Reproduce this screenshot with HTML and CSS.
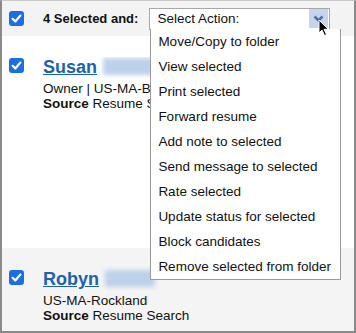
FILE: index.html
```html
<!DOCTYPE html>
<html lang="en">
<head>
    <meta charset="UTF-8">
    <meta name="viewport" content="width=device-width, initial-scale=1.0">
    <title>Candidates</title>
    <link rel="stylesheet" href="styles.css">
</head>
<body>
    <div class="frame">
        <div class="toolbar">
            <span class="check"><svg viewBox="0 0 15 15" width="15" height="15"><rect width="15" height="15" rx="3" fill="#1a6fe6"/><path d="M3.6 7.8 L6.3 10.4 L11.4 4.6" fill="none" stroke="#fff" stroke-width="2.2" stroke-linecap="round" stroke-linejoin="round"/></svg></span>
            <span class="selected-count">4 Selected and:</span>
            <div class="action-select">
                <span class="action-label">Select Action:</span>
                <span class="chevron"><svg viewBox="0 0 19 19" width="19" height="19"><path d="M5.5 7.5 L9.5 11.5 L13.5 7.5" fill="none" stroke="#4f70a8" stroke-width="2.6"/></svg></span>
                <svg class="cursor" viewBox="0 0 12 18" width="12" height="18"><path d="M1 1 L1 14 L4 11 L6.5 16.5 L8.5 15.5 L6 10.3 L10.3 10.3 Z" fill="#000" stroke="#fff" stroke-width="1"/></svg>
                <ul class="action-menu">
                    <li>Move/Copy to folder</li>
                    <li>View selected</li>
                    <li>Print selected</li>
                    <li>Forward resume</li>
                    <li>Add note to selected</li>
                    <li>Send message to selected</li>
                    <li>Rate selected</li>
                    <li>Update status for selected</li>
                    <li>Block candidates</li>
                    <li>Remove selected from folder</li>
                </ul>
            </div>
        </div>

        <div class="candidate first">
            <span class="check"><svg viewBox="0 0 15 15" width="15" height="15"><rect width="15" height="15" rx="3" fill="#1a6fe6"/><path d="M3.6 7.8 L6.3 10.4 L11.4 4.6" fill="none" stroke="#fff" stroke-width="2.2" stroke-linecap="round" stroke-linejoin="round"/></svg></span>
            <div class="info clipped">
                <a class="name" href="#">Susan</a><span class="blur wide"></span>
                <div class="line">Owner | US-MA-Braintree</div>
                <div class="line"><b>Source</b> Resume Search</div>
            </div>
        </div>

        <div class="candidate shaded">
            <span class="check"><svg viewBox="0 0 15 15" width="15" height="15"><rect width="15" height="15" rx="3" fill="#1a6fe6"/><path d="M3.6 7.8 L6.3 10.4 L11.4 4.6" fill="none" stroke="#fff" stroke-width="2.2" stroke-linecap="round" stroke-linejoin="round"/></svg></span>
            <div class="info">
                <a class="name" href="#">Robyn</a><span class="blur"></span>
                <div class="line">US-MA-Rockland</div>
                <div class="line"><b>Source</b> Resume Search</div>
            </div>
        </div>
    </div>
</body>
</html>
```

FILE: styles.css
```css
body {
    margin: 0;
    font-family: "Liberation Sans", Arial, sans-serif;
    color: #111;
}

.frame {
    width: 356px;
    height: 333px;
    box-sizing: border-box;
    border: 2px solid #8a8a8a;
    border-top: 1px solid #c9c9c9;
    overflow: hidden;
    background: #fff;
}

.toolbar {
    display: flex;
    align-items: center;
    height: 35px;
    padding-left: 7px;
    background: #f3f3f3;
}

.check {
    display: block;
    width: 15px;
    height: 15px;
    flex-shrink: 0;
}

.check svg {
    display: block;
}

.selected-count {
    margin-left: 19px;
    font-size: 13px;
    font-weight: bold;
}

.action-select {
    position: relative;
    display: flex;
    align-items: center;
    margin-left: 11px;
    width: 181px;
    height: 22px;
    box-sizing: border-box;
    border: 1px solid #a8a8a8;
    background: #fff;
}

.action-label {
    flex: 1;
    padding-left: 7px;
    font-size: 13.5px;
}

.chevron {
    display: block;
    width: 19px;
    height: 19px;
    margin-right: 1px;
    background: #c6d4ee;
}

.chevron svg {
    display: block;
}

.cursor {
    position: absolute;
    left: 168px;
    top: 10px;
    z-index: 3;
}

.action-menu {
    position: absolute;
    top: 100%;
    left: 0;
    z-index: 2;
    width: 191px;
    margin: 0;
    padding: 0;
    list-style: none;
    box-sizing: border-box;
    border: 1px solid #9a9a9a;
    border-top: none;
    background: #fff;
}

.action-menu li {
    padding-left: 7px;
    font-size: 13.5px;
    line-height: 25px;
    white-space: nowrap;
}

.candidate {
    display: flex;
    align-items: flex-start;
    gap: 19px;
    padding: 21px 7px 0;
}

.candidate .check {
    margin-top: 1px;
}

.candidate.first {
    height: 212px;
    box-sizing: border-box;
}

.candidate.shaded {
    height: 90px;
    box-sizing: border-box;
    background: #f4f4f4;
}

.info {
    white-space: nowrap;
}

/* the open menu hides the rest of this row */
.info.clipped {
    width: 107px;
    overflow: hidden;
}

.name {
    font-size: 18px;
    font-weight: bold;
    line-height: 20px;
    color: #1d62ab;
}

.blur {
    display: inline-block;
    width: 50px;
    height: 17px;
    margin-left: 6px;
    vertical-align: -2px;
    background: #bdd1ea;
    filter: blur(2px);
}

.blur.wide {
    width: 70px;
}

.line {
    font-size: 13.5px;
    line-height: 15px;
}

.info .line:first-of-type {
    margin-top: 4px;
}
```
